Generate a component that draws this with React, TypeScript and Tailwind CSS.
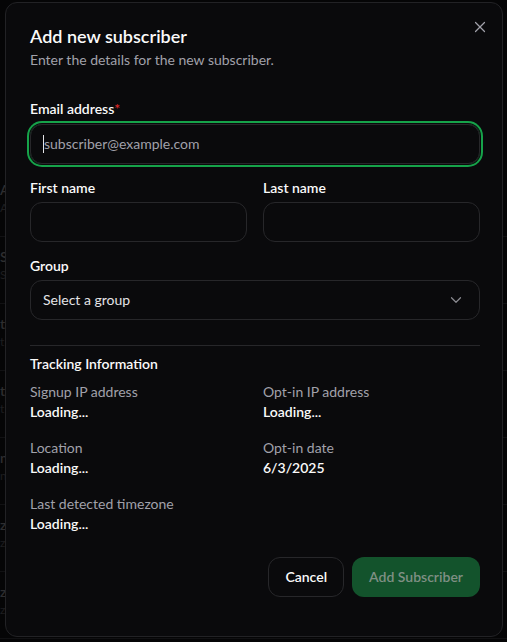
import { X, ChevronDown } from "lucide-react";

const FONT = { fontFamily: "Lato, 'Noto Sans', sans-serif" };

function Field({ label, value }: { label: string; value: string }) {
  return (
    <div>
      <div className="text-sm leading-5 text-[#a1a1aa]">{label}</div>
      <div className="text-sm leading-5 font-semibold text-[#fafafa]">{value}</div>
    </div>
  );
}

export default function App() {
  const bgRows = ["A", "S", "t", "t", "n", "z", "z"];

  return (
    <div className="relative h-[642px] w-[507px] overflow-hidden bg-[#050506]" style={FONT}>
      {/* page behind the dialog, mostly hidden */}
      <div className="pt-[170px] text-[#2e2e30]">
        {bgRows.map((c, i) => (
          <div key={i} className="h-[67px] border-b border-[#111113] pt-[10px] text-sm font-semibold">
            {c}
            <div className="text-xs font-normal text-[#1e1e20]">{c}</div>
          </div>
        ))}
        <div className="pl-1 pt-[2px] text-sm leading-4 text-[#3a3a3c]">mysounbottaxo_3708@yopmail.com</div>
      </div>

      <div className="absolute left-[5px] top-[2px] flex h-[635px] w-[498px] flex-col rounded-xl border border-[#222225] bg-[#0a0a0c] pl-6 pr-[22px] pt-[19px]">
        <button className="absolute right-[13px] top-[15px] text-[#a1a1aa]">
          <X size={18} strokeWidth={1.6} />
        </button>

        <h2 className="text-lg leading-7 font-semibold text-[#fafafa]">Add new subscriber</h2>
        <p className="text-sm leading-5 text-[#a1a1aa]">Enter the details for the new subscriber.</p>

        <div className="mt-[29px] flex flex-col">
          <div className="flex flex-col gap-[5px]">
            <label className="text-sm leading-5 font-semibold text-[#fafafa]">
              Email address<span className="text-[#dc2626]">*</span>
            </label>
            <div className="flex h-10 items-center rounded-xl border border-[#27272a] px-3 ring-2 ring-[#16a34a] ring-offset-1 ring-offset-[#0a0a0c]">
              <span className="h-[18px] w-px bg-[#e4e4e7]" />
              <span className="text-sm text-[#a1a1aa]">subscriber@example.com</span>
            </div>
          </div>

          <div className="mt-[14px] grid grid-cols-2 gap-4">
            <div className="flex flex-col gap-[4px]">
              <label className="text-sm leading-5 font-semibold text-[#fafafa]">First name</label>
              <div className="h-10 rounded-xl border border-[#27272a]" />
            </div>
            <div className="flex flex-col gap-[4px]">
              <label className="text-sm leading-5 font-semibold text-[#fafafa]">Last name</label>
              <div className="h-10 rounded-xl border border-[#27272a]" />
            </div>
          </div>

          <div className="mt-[14px] flex flex-col gap-[4px]">
            <label className="text-sm leading-5 font-semibold text-[#fafafa]">Group</label>
            <div className="flex h-10 items-center justify-between rounded-xl border border-[#27272a] pl-3 pr-[14px]">
              <span className="text-sm text-[#e4e4e7]">Select a group</span>
              <ChevronDown size={18} strokeWidth={1.6} className="text-[#8a8a90]" />
            </div>
          </div>
        </div>

        <div className="mt-[25px] border-t border-[#27272a] pt-[8px]">
          <h3 className="text-sm leading-5 font-semibold text-[#fafafa]">Tracking Information</h3>
          <div className="mt-2 grid grid-cols-2 gap-x-4 gap-y-4">
            <Field label="Signup IP address" value="Loading..." />
            <Field label="Opt-in IP address" value="Loading..." />
            <Field label="Location" value="Loading..." />
            <Field label="Opt-in date" value="6/3/2025" />
            <Field label="Last detected timezone" value="Loading..." />
          </div>
        </div>

        <div className="mt-[23px] flex justify-end gap-2">
          <button className="h-10 rounded-xl border border-[#27272a] px-4 text-sm font-semibold text-[#fafafa]">
            Cancel
          </button>
          <button className="h-10 rounded-xl bg-[#13532c] px-[17px] text-sm font-semibold text-[#7f8f84]">
            Add Subscriber
          </button>
        </div>
      </div>
    </div>
  );
}
